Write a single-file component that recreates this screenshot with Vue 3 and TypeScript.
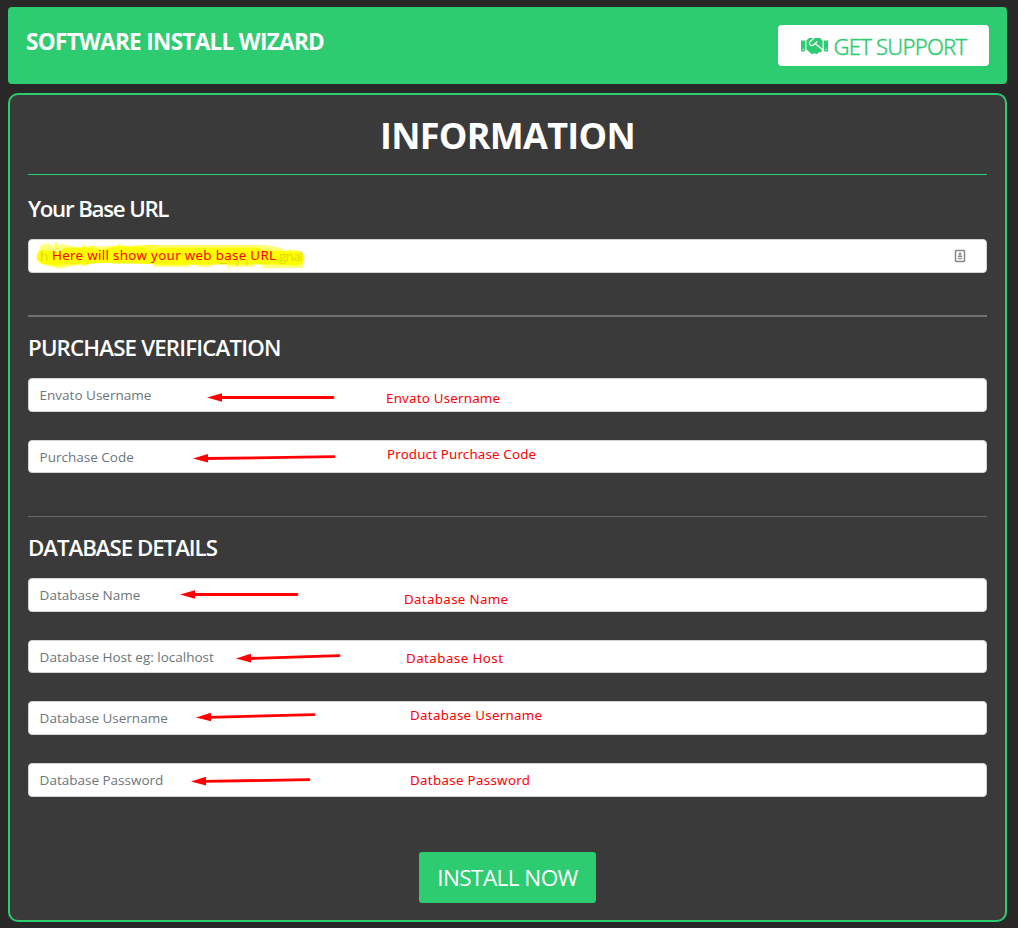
<script setup lang="ts">
interface Note {
  text: string
  x: number
  y: number
  width: number
}

interface Field {
  name: string
  placeholder: string
  type: string
  arrow: { x1: number; y1: number; x2: number; y2: number }
  note: Note
}

// Arrow and note coordinates are relative to the field's top left corner.
const purchaseFields: Field[] = [
  {
    name: 'envato_username', placeholder: 'Envato Username', type: 'text',
    arrow: { x1: 179, y1: 19.5, x2: 306, y2: 19.5 },
    note: { text: 'Envato Username', x: 358, y: 25, width: 114 },
  },
  {
    name: 'purchase_code', placeholder: 'Purchase Code', type: 'text',
    arrow: { x1: 165, y1: 18.5, x2: 307, y2: 16.7 },
    note: { text: 'Product Purchase Code', x: 359, y: 19, width: 149 },
  },
]

const databaseFields: Field[] = [
  {
    name: 'db_name', placeholder: 'Database Name', type: 'text',
    arrow: { x1: 152, y1: 16.5, x2: 270, y2: 16.5 },
    note: { text: 'Database Name', x: 376, y: 26, width: 104 },
  },
  {
    name: 'db_host', placeholder: 'Database Host eg: localhost', type: 'text',
    arrow: { x1: 208, y1: 18.5, x2: 312, y2: 15.7 },
    note: { text: 'Database Host', x: 378, y: 23, width: 97 },
  },
  {
    name: 'db_username', placeholder: 'Database Username', type: 'text',
    arrow: { x1: 168, y1: 16.4, x2: 287, y2: 13.6 },
    note: { text: 'Database Username', x: 382, y: 19, width: 132 },
  },
  {
    name: 'db_password', placeholder: 'Database Password', type: 'text',
    arrow: { x1: 163, y1: 18.4, x2: 282, y2: 16.6 },
    note: { text: 'Datbase Password', x: 382, y: 22, width: 120 },
  },
]

const groups = [
  { title: 'PURCHASE VERIFICATION', kind: 'purchase', fields: purchaseFields },
  { title: 'DATABASE DETAILS', kind: 'database', fields: databaseFields },
]

function angle(a: Field['arrow']): number {
  return (Math.atan2(a.y2 - a.y1, a.x2 - a.x1) * 180) / Math.PI
}
</script>

<template>
  <div class="page">
    <header class="topbar">
      <h1 class="brand">SOFTWARE INSTALL WIZARD</h1>
      <button class="support" type="button">
        <svg class="handshake" viewBox="0 0 640 512" aria-hidden="true">
          <path
            fill="currentColor"
            d="M434.7 64h-85.9c-8 0-15.7 3-21.6 8.4l-98.3 90c-.1.1-.2.3-.3.4-16.6 15.6-16.3 40.5-2.1 56 12.7 13.9 39.4 17.6 56.1 2.7.1-.1.3-.1.4-.2l79.9-73.2c6.5-5.9 16.7-5.5 22.6 1 6 6.5 5.5 16.6-1 22.6l-26.1 23.9L504 313.8c2.9 2.4 5.5 5 7.9 7.7V128l-54.6-54.6c-5.9-6-14.1-9.4-22.6-9.4zM544 128.2v223.9c0 17.7 14.3 32 32 32h64V128.2h-96zm48 223.9c-8.8 0-16-7.2-16-16s7.2-16 16-16 16 7.2 16 16-7.2 16-16 16zM0 384h64c17.7 0 32-14.3 32-32V128.2H0V384zm48-63.9c8.8 0 16 7.2 16 16s-7.2 16-16 16-16-7.2-16-16c0-8.9 7.2-16 16-16zm435.9 18.6L334.6 217.5l-30 27.5c-29.7 27.1-75.2 24.5-101.7-4.4-26.9-29.4-24.8-74.9 4.4-101.7L289.1 64h-83.8c-8.5 0-16.6 3.4-22.6 9.4L128 128v223.9h18.3l90.5 81.9c27.4 22.3 67.7 18.1 90-9.3l.2-.2 17.9 15.5c15.9 13 39.4 10.5 52.3-5.4l31.4-38.6 5.4 4.4c13.7 11.1 33.9 9.1 45-4.7l9.5-11.7c11.2-13.8 9.1-33.9-4.6-45.1z"
          />
        </svg>
        <span class="support-label">GET SUPPORT</span>
      </button>
    </header>

    <main class="panel">
      <h2 class="heading">INFORMATION</h2>

      <section class="group base">
        <h3 class="title base-title">Your Base URL</h3>
        <div class="field">
          <input class="control" type="text" name="base_url" aria-label="Your Base URL" />
          <svg class="marks" viewBox="0 0 959 34" aria-hidden="true">
            <g fill="none" stroke="#ffff00" stroke-linecap="round">
              <path stroke-opacity=".5" stroke-width="14" d="M18 11.5L20 12M34 12L50 16L64 14" />
              <path stroke-opacity=".55" stroke-width="15" d="M16 18L32 22L52 18M93 14L110 15M118 13.5H236L250 16M262 18L269 19" />
              <path stroke-opacity=".5" stroke-width="12" stroke-linecap="butt" d="M60 13H100M105 12H129M125 22H161M170 22H184M203 22H226M234 23H275" />
              <path stroke-width="14" d="M16 18L29 20L43 17.5L57 18L80 16.5L102 17L138 19L175 18.5L218 18L242 18.5L269 19.5" />
              <path stroke-width="17" d="M40 17H60M86 16H112M134 17H228" />
              <path stroke-opacity=".65" stroke-width="3" d="M28 5V9M56 7V26M201 23V28M91 6V10M151 22V25" />
            </g>
            <path
              fill="none" stroke="#8f8f00" stroke-opacity=".35" stroke-width="1"
              d="M192 24.5H199M201 19V23M210 21V25.5L208 26.5M219 21V26"
            />
            <g class="ghost">
              <text x="12" y="22">h</text>
              <text x="251" y="22" textLength="24">gnal</text>
            </g>
            <text class="note" x="24" y="21" textLength="224">Here will show your web base URL</text>
          </svg>
          <svg class="contact" viewBox="0 0 12 14" aria-hidden="true">
            <rect x="1.5" y="1.5" width="9" height="11" rx=".6" fill="#fff" stroke="#898989" stroke-width="1.5" />
            <circle cx="6" cy="4.8" r="1.3" fill="#898989" />
            <path fill="#898989" d="M3.8 8.3V7.5Q3.8 6.3 6 6.3T8.2 7.5V8.3zM3.8 9.3H8.2V10.3H3.8z" />
          </svg>
        </div>
      </section>

      <section v-for="group in groups" :key="group.kind" class="group" :class="group.kind">
        <h3 class="title">{{ group.title }}</h3>
        <div class="fields">
          <div v-for="field in group.fields" :key="field.name" class="field">
            <input class="control" :type="field.type" :name="field.name" :placeholder="field.placeholder" />
            <svg class="marks" viewBox="0 0 959 34" aria-hidden="true">
              <line
                :x1="field.arrow.x1 + 12" :y1="field.arrow.y1"
                :x2="field.arrow.x2 - 1" :y2="field.arrow.y2"
                stroke="#ff0000" stroke-width="2.8" stroke-linecap="round"
              />
              <path
                d="M0 0L15 -4.3V4.3z" fill="#ff0000"
                :transform="`translate(${field.arrow.x1} ${field.arrow.y1}) rotate(${angle(field.arrow)})`"
              />
              <text class="note" :x="field.note.x" :y="field.note.y" :textLength="field.note.width">{{ field.note.text }}</text>
            </svg>
          </div>
        </div>
      </section>

      <button class="install" type="button"><span class="install-label">INSTALL NOW</span></button>
    </main>
  </div>
</template>

<style>
body {
  margin: 0;
  background: #282828;
}
</style>

<style scoped>
.page {
  box-sizing: border-box;
  height: 928px;
  padding: 7px 11px 6px 8px;
  display: flex;
  flex-direction: column;
  gap: 9px;
  background: #282828;
  color: #fff;
  font-family: 'Segoe UI', 'Open Sans', 'Noto Sans', sans-serif;
}
.topbar {
  box-sizing: border-box;
  height: 77px;
  padding: 18px;
  display: flex;
  justify-content: space-between;
  align-items: flex-start;
  background: #2ecc71;
  border-radius: 4px;
}
.brand {
  margin: 0;
  font-size: 22.5px;
  line-height: 34px;
  font-weight: 700;
  letter-spacing: -0.67px;
  white-space: nowrap;
}
.support {
  width: 211px;
  height: 41px;
  padding: 0;
  border: 0;
  border-radius: 4px;
  display: flex;
  align-items: center;
  justify-content: center;
  gap: 6px;
  background: #fff;
  color: #2ecc71;
  font-family: 'Segoe UI', 'Noto Sans', 'Open Sans', sans-serif;
  font-size: 22px;
  font-weight: 300;
  letter-spacing: -0.75px;
  white-space: nowrap;
}
.support-label {
  -webkit-text-stroke: 0.35px currentColor;
}
.handshake {
  width: 27px;
  height: 22px;
}
.panel {
  box-sizing: border-box;
  flex: 1;
  min-height: 0;
  padding: 0 18px;
  display: flex;
  flex-direction: column;
  background: #3a3a3a;
  border: 2px solid #2ecc71;
  border-radius: 10px;
}
.heading {
  box-sizing: border-box;
  height: 80px;
  margin: 0;
  font-size: 36px;
  line-height: 82px;
  font-weight: 700;
  letter-spacing: -0.7px;
  text-align: center;
  border-bottom: 1px solid #2ecc71;
}
.group {
  box-sizing: border-box;
}
.base {
  height: 142px;
  padding-top: 18px;
  border-bottom: 2px solid #707070;
}
.purchase {
  height: 200px;
  padding-top: 15px;
  border-bottom: 1px solid #6b6b6b;
}
.database {
  height: 335px;
  padding-top: 15px;
}
.title {
  height: 34px;
  margin: 0 0 12px;
  font-size: 22.3px;
  line-height: 32px;
  font-weight: 600;
  letter-spacing: -0.83px;
  white-space: nowrap;
}
.base-title {
  letter-spacing: -1.35px;
  word-spacing: 0.6px;
}
.database .title {
  letter-spacing: -1.05px;
}
.fields {
  display: grid;
  gap: 28.07px;
}
.field {
  position: relative;
  height: 33.6px;
}
.control {
  box-sizing: border-box;
  display: block;
  width: 100%;
  height: 33.6px;
  padding: 0.7px 10.6px 0;
  border: 1px solid #ced4da;
  border-radius: 4px;
  background: #fff;
  color: #495057;
  font-family: inherit;
  font-size: 13.5px;
}
.control::placeholder {
  color: #6c757d;
  opacity: 1;
}
.marks {
  position: absolute;
  top: 0;
  left: 0;
  width: 959px;
  height: 34px;
  pointer-events: none;
}
.note {
  font-family: 'Noto Sans', sans-serif;
  font-size: 13.3px;
  fill: #ff0000;
}
.ghost {
  font-size: 13.5px;
  fill: #9b9b00;
  opacity: 0.35;
}
.contact {
  position: absolute;
  top: 10px;
  right: 21px;
  width: 12px;
  height: 14px;
}
.install {
  width: 177px;
  height: 51px;
  padding: 0;
  align-self: center;
  border: 0;
  border-radius: 3px;
  background: #2ecc71;
  color: #fff;
  font-family: inherit;
  font-size: 22.5px;
  letter-spacing: -0.55px;
  white-space: nowrap;
}
</style>
